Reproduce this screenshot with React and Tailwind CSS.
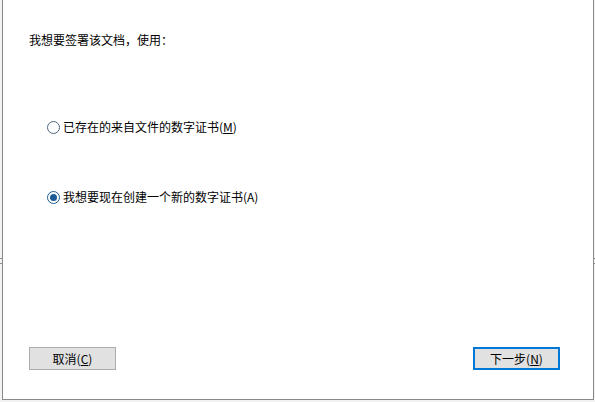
import React, { useState } from 'react'

const font = { fontFamily: '"Noto Sans CJK SC", "Noto Sans", sans-serif' }

function Radio({ checked, onClick, children }) {
  return (
    <div onClick={onClick} className="flex items-center h-4 pl-[44px] cursor-default select-none">
      <span className={'w-[13px] h-[13px] rounded-full border flex items-center justify-center bg-white ' + (checked ? 'border-[#1b5b94]' : 'border-[#4d6780]')}>
        {checked && <span className="w-[7px] h-[7px] rounded-full bg-[#1b5b94]" />}
      </span>
      <span className="ml-[3px] text-[12px] leading-4 text-black">{children}</span>
    </div>
  )
}

export default function App() {
  const [choice, setChoice] = useState('new')

  return (
    <div className="relative w-[595px] h-[402px] bg-[#f2f2f2] flex pl-[2px] pr-[1px] pb-[2px]" style={font}>
      {/* bits of the window behind */}
      <div className="absolute left-0 top-[258px] w-[2px] h-[6px] border-y border-[#8c8c8c]" />
      <div className="absolute right-0 top-[258px] w-[1px] h-[6px] border-y border-[#8c8c8c]" />

      <div className="flex-1 bg-white border-l border-r border-b border-[#8a8a8a] flex flex-col">
        <div className="pl-[26px] pt-[32px] text-[12px] leading-4 text-black">我想要签署该文档，使用：</div>

        <div className="mt-[71px]">
          <Radio checked={choice === 'file'} onClick={() => setChoice('file')}>
            已存在的来自文件的数字证书(<span className="underline">M</span>)
          </Radio>
        </div>
        <div className="mt-[54px]">
          <Radio checked={choice === 'new'} onClick={() => setChoice('new')}>
            我想要现在创建一个新的数字证书(A)
          </Radio>
        </div>

        <div className="mt-auto flex justify-between pl-[26px] pr-[33px] pb-[29px]">
          <button className="w-[87px] h-[23px] bg-[#e1e1e1] border border-[#adadad] text-[12px] leading-4 text-black">
            取消(<span className="underline">C</span>)
          </button>
          <button className="w-[87px] h-[23px] bg-[#e1e1e1] border-2 border-[#0078d7] text-[12px] leading-4 text-black">
            下一步(<span className="underline">N</span>)
          </button>
        </div>
      </div>
    </div>
  )
}
